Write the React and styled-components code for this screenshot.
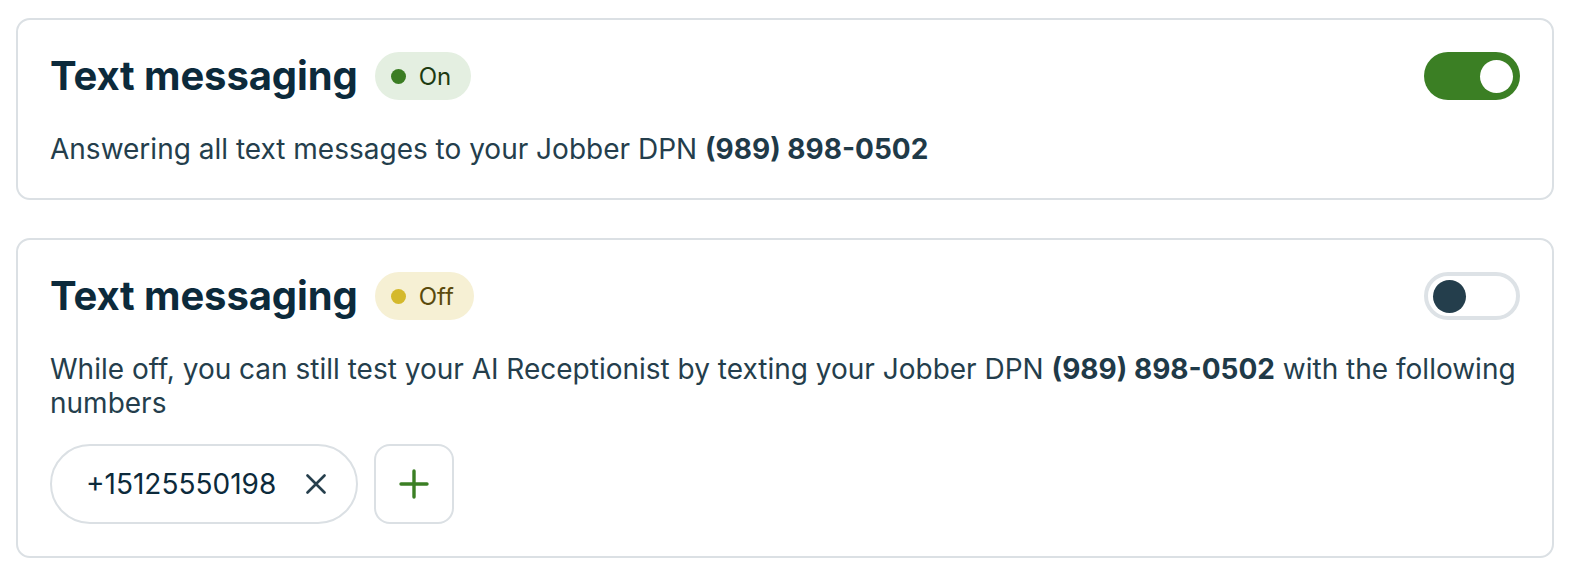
import React from "react";
import styled, { createGlobalStyle } from "styled-components";

const Global = createGlobalStyle`
  html, body { margin: 0; padding: 0; background: #ffffff; }
  body { font-family: Inter, "Noto Sans", "Liberation Sans", sans-serif; -webkit-font-smoothing: antialiased; }
  * { box-sizing: border-box; }
`;

const Page = styled.div`
  display: flex;
  flex-direction: column;
  gap: 38px;
  padding: 18px 24px 18px 16px;
`;

const Card = styled.section`
  border: 2px solid #dbe0e4;
  border-radius: 14px;
  padding: 32px;
  display: flex;
  flex-direction: column;
`;

const Header = styled.div`
  display: flex;
  align-items: center;
  justify-content: space-between;
  height: 48px;
`;

const TitleGroup = styled.div`
  display: flex;
  align-items: center;
  gap: 17px;
`;

const Title = styled.h2`
  margin: 0;
  font-size: 40px;
  line-height: 48px;
  font-weight: 700;
  color: #0c2a3b;
  letter-spacing: -0.1px;
`;

const Badge = styled.span`
  display: inline-flex;
  align-items: center;
  gap: 13px;
  height: 48px;
  padding: 0 20px 0 16px;
  border-radius: 24px;
  background: ${(p) => (p.$on ? "#e4efe1" : "#f6f0d4")};
  color: ${(p) => (p.$on ? "#1d3b12" : "#5a4a0c")};
  font-size: 24px;
  font-weight: 400;
`;

const Dot = styled.span`
  width: 15px;
  height: 15px;
  border-radius: 50%;
  background: ${(p) => (p.$on ? "#3b7d23" : "#d4b92c")};
`;

const Toggle = styled.button`
  width: 96px;
  height: 48px;
  border-radius: 24px;
  margin: 0;
  cursor: pointer;
  display: flex;
  align-items: center;
  background: ${(p) => (p.$on ? "#3b7f24" : "#ffffff")};
  border: ${(p) => (p.$on ? "none" : "4px solid #dde2e6")};
  justify-content: ${(p) => (p.$on ? "flex-end" : "flex-start")};
  padding: ${(p) => (p.$on ? "0 7px" : "0 5px")};
`;

const Knob = styled.span`
  width: 33px;
  height: 33px;
  border-radius: 50%;
  background: ${(p) => (p.$on ? "#ffffff" : "#243e4c")};
`;

const Body = styled.p`
  margin: 32px 0 0;
  font-size: 28px;
  line-height: 34px;
  color: #243e4c;
  strong { font-weight: 700; color: #1f3a48; }
`;

const Chips = styled.div`
  display: flex;
  align-items: center;
  gap: 16px;
  margin-top: 24px;
`;

const Chip = styled.div`
  display: inline-flex;
  align-items: center;
  gap: 30px;
  height: 80px;
  padding: 0 30px 0 34px;
  border: 2px solid #dbe0e4;
  border-radius: 40px;
  font-size: 28px;
  color: #0c2a3b;
`;

const IconButton = styled.button`
  width: 80px;
  height: 80px;
  border: 2px solid #dbe0e4;
  border-radius: 16px;
  background: #fff;
  display: flex;
  align-items: center;
  justify-content: center;
  padding: 0;
  cursor: pointer;
`;

const CloseIcon = () => (
  <svg width="20" height="20" viewBox="0 0 20 20">
    <path d="M1.5 1.5 L18.5 18.5 M18.5 1.5 L1.5 18.5" stroke="#263f4d" strokeWidth="2.6" strokeLinecap="round" />
  </svg>
);

const PlusIcon = () => (
  <svg width="30" height="30" viewBox="0 0 30 30">
    <path d="M15 2 V28 M2 15 H28" stroke="#3b7f24" strokeWidth="3.4" strokeLinecap="round" />
  </svg>
);

const SettingHeader = ({ on }) => (
  <Header>
    <TitleGroup>
      <Title>Text messaging</Title>
      <Badge $on={on}>
        <Dot $on={on} />
        {on ? "On" : "Off"}
      </Badge>
    </TitleGroup>
    <Toggle $on={on} aria-pressed={on}>
      <Knob $on={on} />
    </Toggle>
  </Header>
);

export default function App() {
  return (
    <>
      <Global />
      <Page>
        <Card>
          <SettingHeader on />
          <Body>
            Answering all text messages to your Jobber DPN <strong>(989) 898-0502</strong>
          </Body>
        </Card>
        <Card>
          <SettingHeader on={false} />
          <Body>
            While off, you can still test your AI Receptionist by texting your Jobber DPN{" "}
            <strong>(989) 898-0502</strong> with the following numbers
          </Body>
          <Chips>
            <Chip>
              +15125550198
              <CloseIcon />
            </Chip>
            <IconButton aria-label="Add number">
              <PlusIcon />
            </IconButton>
          </Chips>
        </Card>
      </Page>
    </>
  );
}
